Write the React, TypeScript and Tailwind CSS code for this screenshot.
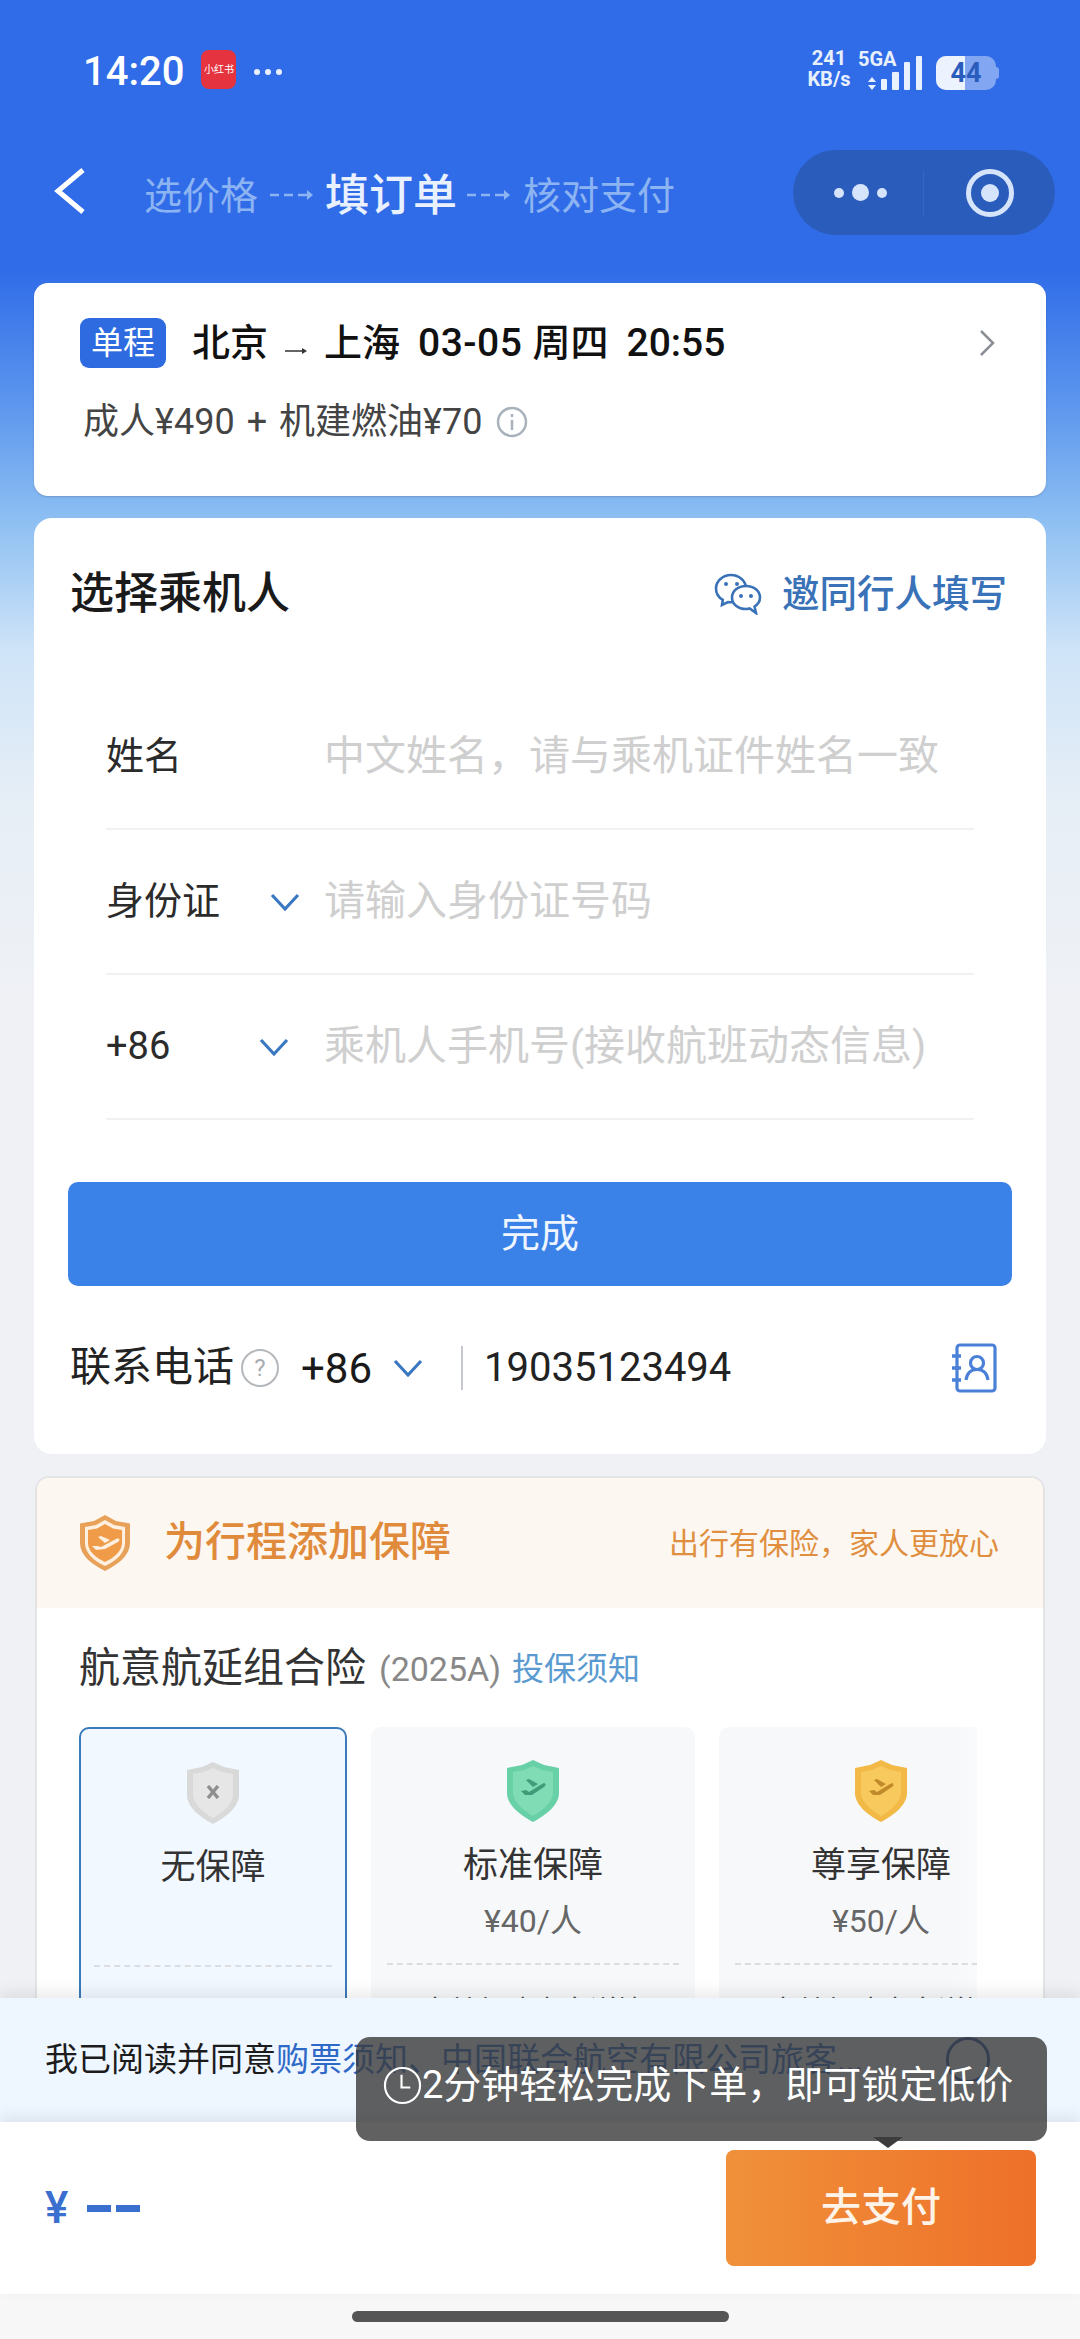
import type { ReactNode } from "react";

const Chevron = ({ className }: { className: string }) => (
    <svg viewBox="0 0 30 20" className={className} fill="none" stroke="currentColor" strokeWidth="3.2">
        <path d="M2 3l13 14L28 3" />
    </svg>
);

const DashArrow = () => (
    <svg viewBox="0 0 44 14" className="w-[44px] h-[14px] mx-[4px]" fill="none" stroke="#8db4f2" strokeWidth="2.5">
        <path d="M0 7h9M14 7h9M28 7h12" />
        <path d="M37 2l6 5-6 5z" fill="#8db4f2" stroke="none" />
    </svg>
);

const WeChatIcon = () => (
    <svg viewBox="0 0 48 42" className="w-[48px] h-[42px]" fill="none" stroke="#3a72b8" strokeWidth="2.6">
        <path d="M17 2C8.700 2 2 8 2 15.500c0 4.800 2.700 9 6.800 11.400L8 32l6-3c1 .2 2 .3 3 .3 8.300 0 15-6 15-13.800C32 8 25.300 2 17 2z" />
        <path d="M32 13c-8 0-14 5-14 11.500S24 36 32 36c1.300 0 2.500-.2 3.700-.5L42 40l-1.500-6.500c3.500-2.100 5.500-5.300 5.500-9C46 18 40 13 32 13z" fill="#fff" />
        <circle cx="12" cy="11" r="2" fill="#3a72b8" stroke="none" />
        <circle cx="23" cy="11" r="2" fill="#3a72b8" stroke="none" />
        <circle cx="27" cy="23" r="2" fill="#3a72b8" stroke="none" />
        <circle cx="37" cy="23" r="2" fill="#3a72b8" stroke="none" />
    </svg>
);

const ContactIcon = () => (
    <svg viewBox="0 0 46 50" className="w-[46px] h-[50px]" fill="none" stroke="#4a80d8" strokeWidth="3.2">
        <rect x="6" y="2" width="38" height="46" rx="3" />
        <path d="M1 13h9M1 25h9M1 37h9" strokeWidth="3.500" />
        <circle cx="26" cy="20" r="6.500" />
        <path d="M15 37c1-7 5-10.500 11-10.500S36 30 37 37" />
    </svg>
);

const OrangeShield = () => (
    <svg viewBox="0 0 52 56" className="w-[52px] h-[56px]">
        <path d="M26 0l11 6 14 2.500V28c0 12-11 21-25 28C12 49 1 40 1 28V8.500L15 6z" fill="#e8a158" />
        <path d="M26 5l9 5 11 2v16c0 10-9 18-20 23C15 46 6 38 6 28V12l11-2z" fill="#fdf0e0" />
        <path d="M26 9l8 4.500 9 1.500v13c0 8-8 15-17 19C17 43 9 36 9 28V15l9-1.500z" fill="#ef9b48" />
        <path d="M13 31h6l3 1 15-8c3-1.500 5 1 2 3l-13 7-9 1zM19 22l3-1 9 4-5 3z" fill="#fdf0e0" />
    </svg>
);

const PlaneMark = ({ color }: { color: string }) => (
    <path d="M17 32l5-1 3 2 13-8c3-2 5 1 2 3l-12 8H21zM22 21l3-1 9 5-5 3z" fill={color} />
);

const Shield = ({ body, edge, children }: { body: string; edge: string; children: ReactNode }) => (
    <svg viewBox="0 0 58 64" className="w-[58px] h-[64px]">
        <path d="M29 1l11 5 15 3v25c0 12-13 22-26 29C16 56 3 46 3 34V9l15-3z" fill={edge} />
        <path d="M29 7l9 4 11 2v20c0 10-10 18-20 24C19 51 9 43 9 33V13l11-2z" fill={body} />
        {children}
    </svg>
);

const Field = ({ label, hint, chevron }: { label: string; hint: string; chevron?: string }) => (
    <div className="flex items-center h-[145px] border-b-2 border-[#f0f1f3] relative">
        <span className="text-[38px] text-[#2b2b2b]">{label}</span>
        {chevron && <Chevron className={chevron} />}
        <span className="absolute left-[218px] text-[41px] text-[#cfcfcf] whitespace-nowrap">{hint}</span>
    </div>
);

const PlanCard = ({ className, icon, name, price, foot }: { className: string; icon: ReactNode; name: string; price?: string; foot: string }) => (
    <div className={`shrink-0 rounded-[10px] flex flex-col items-center pt-[32px] h-[320px] overflow-hidden ${className}`}>
        {icon}
        <div className="text-[35px] text-[#333] mt-[18px] leading-[50px]">{name}</div>
        <div className="text-[32px] text-[#666] mt-[5px] leading-[50px] h-[50px]">{price}</div>
        <div className="w-[90%] border-t-2 border-dashed border-[#dcdde0] mt-[17px]" />
        <div className="text-[28px] text-[#444] mt-[26px] whitespace-nowrap">{foot}</div>
    </div>
);

export default function App() {
    return (
        <div
            className="relative w-[1080px] h-[2339px] overflow-hidden flex flex-col bg-[linear-gradient(180deg,#306ce8_0,#306ce8_270px,#5b95ee_400px,#8dbff2_520px,#cfe4f8_650px,#e6eef6_800px,#eff1f5_1000px)]"
            style={{ fontFamily: 'Roboto, "Noto Sans CJK SC", sans-serif' }}
        >
            <div className="flex-1 min-h-0 overflow-hidden">
                {/* status bar */}
                <div className="flex items-center h-[90px] pt-[54px] pl-[83px] pr-[81px] text-white">
                    <span className="text-[40px] font-medium leading-none">14:20</span>
                    <span className="ml-[17px] mt-[-5px] w-[35px] h-[39px] rounded-[8px] bg-[#e5343f] flex items-center justify-center text-[10px] leading-none whitespace-nowrap">小红书</span>
                    <span className="ml-[18px] flex gap-[5px]">
                        <i className="w-[6px] h-[6px] rounded-full bg-white/90" />
                        <i className="w-[6px] h-[6px] rounded-full bg-white/90" />
                        <i className="w-[6px] h-[6px] rounded-full bg-white/90" />
                    </span>
                    <div className="ml-auto flex items-end mt-[-6px]">
                        <div className="flex flex-col items-center text-[20px] font-bold leading-[21px] text-[#e8f0fd] w-[46px]">
                            <span>241</span>
                            <span>KB/s</span>
                        </div>
                        <div className="relative w-[72px] h-[38px] ml-[6px]">
                            <span className="absolute left-0 top-[-3px] text-[20px] font-bold leading-[21px] text-[#e8f0fd]">5GA</span>
                            <svg viewBox="0 0 72 38" className="absolute inset-0 w-[72px] h-[38px]" fill="#eaf1fe">
                                <path d="M14 25l4 5h-8zM14 38l4-5h-8z" />
                                <rect x="23" y="27" width="6" height="11" rx="1" />
                                <rect x="34" y="20" width="7" height="18" rx="1" />
                                <rect x="46" y="10" width="6" height="28" rx="1" />
                                <rect x="58" y="4" width="6" height="34" rx="1" />
                            </svg>
                        </div>
                        <div className="relative ml-[6px] w-[60px] h-[34px] rounded-[10px] bg-white/40 overflow-hidden flex items-center justify-center">
                            <span className="absolute left-0 top-0 bottom-0 w-[29px] bg-[#edf3fe]" />
                            <span className="relative text-[27px] font-bold text-[#2a5cbc] leading-none">44</span>
                        </div>
                        <span className="w-[3px] h-[12px] mb-[11px] bg-white/40 rounded-r" />
                    </div>
                </div>

                {/* nav */}
                <div className="flex items-center h-[85px] mt-[60px] pl-[54px] pr-[25px]">
                    <svg viewBox="0 0 32 48" className="w-[32px] h-[48px] mt-[-4px]" fill="none" stroke="#fff" strokeWidth="5">
                        <path d="M29 3L4 24l25 21" />
                    </svg>
                    <span className="ml-[58px] mt-[8px] text-[38px] text-[#8db4f2]">选价格</span>
                    <span className="ml-[8px] mt-[4px] flex"><DashArrow /></span>
                    <span className="ml-[7px] mt-[6px] text-[44px] font-medium text-[#eaf1fe] whitespace-nowrap">填订单</span>
                    <span className="ml-[6px] mt-[4px] flex items-center"><DashArrow /></span>
                    <span className="ml-[8px] mt-[8px] text-[38px] text-[#8db4f2] whitespace-nowrap">核对支付</span>
                    <div className="ml-auto w-[262px] h-[85px] rounded-full bg-[#2a5cbc] flex items-center">
                        <div className="flex-1 flex items-center justify-center gap-[8px] pl-[4px]">
                            <i className="w-[10px] h-[10px] rounded-full bg-[#d6e4fb]" />
                            <i className="w-[17px] h-[17px] rounded-full bg-[#d6e4fb]" />
                            <i className="w-[10px] h-[10px] rounded-full bg-[#d6e4fb]" />
                        </div>
                        <div className="w-px h-[46px] bg-[#3566c4]" />
                        <div className="w-[131px] flex justify-center">
                            <div className="w-[48px] h-[48px] rounded-full border-[5px] border-[#d6e4fb] flex items-center justify-center">
                                <i className="w-[18px] h-[18px] rounded-full bg-[#d6e4fb]" />
                            </div>
                        </div>
                    </div>
                </div>

                <div className="px-[34px]">
                    {/* flight card */}
                    <div className="mt-[48px] h-[213px] rounded-[14px] bg-white px-[46px] pt-[35px] shadow-[0_1px_2px_rgba(60,80,110,.3)]">
                        <div className="flex items-center h-[50px]">
                            <span className="w-[86px] h-[50px] rounded-[9px] bg-[#2e6be0] text-white text-[32px] flex items-center justify-center">单程</span>
                            <span className="ml-[26px] text-[38px] font-medium text-[#111]">北京</span>
                            <svg viewBox="0 0 22 6" className="w-[22px] h-[6px] ml-[17px] mt-[16px]" fill="#333">
                                <path d="M0 2.200h17V0l5 3-5 3V3.800H0z" />
                            </svg>
                            <span className="ml-[17px] text-[38px] font-medium text-[#111]">上海</span>
                            <span className="ml-[18px] text-[39px] font-medium text-[#111] tracking-[0.5px]">03-05</span>
                            <span className="ml-[10px] text-[38px] font-medium text-[#111]">周四</span>
                            <span className="ml-[18px] text-[39px] font-medium text-[#111]">20:55</span>
                            <svg viewBox="0 0 16 28" className="w-[16px] h-[28px] ml-auto mr-[5px]" fill="none" stroke="#8a8f96" strokeWidth="2.500">
                                <path d="M2 2l12 12L2 26" />
                            </svg>
                        </div>
                        <div className="flex items-center mt-[30px] pl-[3px] text-[36px] text-[#444] leading-[48px] whitespace-nowrap">
                            <span>成人¥490</span>
                            <span className="mx-[12px]">+</span>
                            <span>机建燃油¥70</span>
                            <svg viewBox="0 0 32 32" className="w-[32px] h-[32px] ml-[14px]" fill="none" stroke="#a9b2bb" strokeWidth="2.500">
                                <circle cx="16" cy="16" r="14" />
                                <path d="M16 14v10" />
                                <path d="M16 8v3" />
                            </svg>
                        </div>
                    </div>

                    {/* passenger card */}
                    <div className="mt-[22px] h-[936px] rounded-[18px] bg-white">
                        <div className="flex items-center justify-between pt-[46px] pl-[36px] pr-[39px] h-[106px]">
                            <span className="text-[44px] font-medium text-[#1a1a1a] whitespace-nowrap">选择乘机人</span>
                            <span className="flex items-center gap-[20px] text-[37.500px] font-medium text-[#3a72b8] whitespace-nowrap">
                                <WeChatIcon />
                                邀同行人填写
                            </span>
                        </div>
                        <div className="mx-[72px] mt-[61px] mb-[62px]">
                            <Field label="姓名" hint="中文姓名，请与乘机证件姓名一致" />
                            <Field label="身份证" hint="请输入身份证号码" chevron="w-[30px] h-[20px] text-[#3a78c2] ml-[50px]" />
                            <Field label="+86" hint="乘机人手机号(接收航班动态信息)" chevron="w-[30px] h-[20px] text-[#3a78c2] ml-[89px]" />
                        </div>
                        <div className="mx-[34px] h-[104px] rounded-[10px] bg-[#3b82e8] flex items-center justify-center text-[39px] text-[#eef5ff]">完成</div>
                        <div className="flex items-center mt-[52px] pl-[36px] pr-[49px] h-[60px]">
                            <span className="text-[41px] text-[#222] whitespace-nowrap">联系电话</span>
                            <span className="ml-[7px] w-[38px] h-[38px] rounded-full border-2 border-[#b4b8bd] flex items-center justify-center text-[24px] text-[#a8adb3]">?</span>
                            <span className="ml-[22px] text-[42px] text-[#1a1a1a]">+86</span>
                            <Chevron className="w-[30px] h-[20px] text-[#3a78c2] ml-[21px]" />
                            <span className="ml-[38px] w-[2px] h-[44px] bg-[#c4c7cb]" />
                            <span className="ml-[21px] text-[40px] text-[#222]">19035123494</span>
                            <span className="ml-auto"><ContactIcon /></span>
                        </div>
                    </div>

                    {/* insurance card */}
                    <div className="mt-[22px] mx-px h-[700px] rounded-[14px] border-2 border-[#e3e4e6] bg-white overflow-hidden">
                        <div className="flex items-center h-[130px] bg-[#fdf7f1] pl-[42px] pr-[44px]">
                            <OrangeShield />
                            <span className="ml-[33px] text-[41px] font-medium text-[#e08a3c] whitespace-nowrap">为行程添加保障</span>
                            <span className="ml-auto text-[30px] text-[#df8f3f] whitespace-nowrap">出行有保险，家人更放心</span>
                        </div>
                        <div className="flex items-center pl-[42px] mt-[36px] h-[50px] whitespace-nowrap">
                            <span className="text-[41px] text-[#333]">航意航延组合险</span>
                            <span className="ml-[13px] text-[34px] text-[#888]">(2025A)</span>
                            <span className="ml-[11px] text-[32px] text-[#5a9ad0]">投保须知</span>
                        </div>
                        <div className="flex gap-[24px] ml-[42px] mt-[33px] w-[898px] overflow-hidden">
                            <PlanCard
                                className="w-[268px] bg-[#f2f8ff] border-2 border-[#3a7ab8]"
                                name="无保障"
                                foot="无"
                                icon={
                                    <Shield body="#e6e6e6" edge="#d9d9d9">
                                        <path d="M24 25l10 12M34 25L24 37" stroke="#8e8e8e" strokeWidth="3.500" fill="none" />
                                    </Shield>
                                }
                            />
                            <PlanCard
                                className="w-[324px] bg-[#f7f8fa]"
                                name="标准保障"
                                price="¥40/人"
                                foot="本单保障内容详情"
                                icon={
                                    <Shield body="#7fdcb4" edge="#68d0a6">
                                        <PlaneMark color="#3f9b78" />
                                    </Shield>
                                }
                            />
                            <PlanCard
                                className="w-[324px] bg-[linear-gradient(90deg,#f7f8fa_72%,#ffffff)]"
                                name="尊享保障"
                                price="¥50/人"
                                foot="本单保障内容详情"
                                icon={
                                    <Shield body="#f8ca5e" edge="#f2b947">
                                        <PlaneMark color="#c08a2a" />
                                    </Shield>
                                }
                            />
                        </div>
                    </div>
                </div>
            </div>

            {/* agreement */}
            <div className="relative shrink-0 h-[124px] bg-[#eef6ff] shadow-[0_-6px_14px_rgba(0,0,0,.08)] flex items-center pl-[45px] pr-[90px] text-[33px] whitespace-nowrap">
                <span className="text-[#1c1c1c]">我已阅读并同意</span>
                <span className="text-[#2f69c8]">购票须知、中国联合航空有限公司旅客...</span>
                <span className="ml-auto w-[44px] h-[46px] rounded-full border-[3px] border-[#2a5ab0]" />
            </div>

            {/* pay bar */}
            <div className="relative shrink-0 h-[172px] bg-white shadow-[0_-6px_14px_rgba(0,0,0,.08)] flex items-center pl-[45px] pr-[44px]">
                <span className="text-[44px] font-medium text-[#3a6fd0]">¥</span>
                <span className="ml-[19px] flex gap-[5px]">
                    <i className="w-[24px] h-[7px] bg-[#3a6fd0]" />
                    <i className="w-[24px] h-[7px] bg-[#3a6fd0]" />
                </span>
                <div className="ml-auto w-[310px] h-[116px] rounded-[8px] bg-[linear-gradient(90deg,#f0913a,#ee7029)] flex items-center justify-center text-[40px] font-medium text-[#fdf3e8]">去支付</div>
            </div>

            {/* home indicator */}
            <div className="shrink-0 h-[45px] bg-[#f7f7f7] flex items-center justify-center">
                <span className="w-[377px] h-[11px] rounded-full bg-[#555]" />
            </div>

            {/* tooltip */}
            <div className="absolute left-[356px] top-[2037px] w-[691px] h-[104px] rounded-[14px] bg-[#3a3a3a]/80 flex items-center pl-[27px] pb-[8px] text-[38px] text-white whitespace-nowrap">
                <svg viewBox="0 0 40 40" className="w-[39px] h-[39px] shrink-0" fill="none" stroke="#fff" strokeWidth="2.200">
                    <circle cx="20" cy="20" r="18" />
                    <path d="M19 9v13h9" />
                </svg>
                <span>2分钟轻松完成下单，即可锁定低价</span>
                <span className="absolute left-[517px] top-[100px] w-0 h-0 border-x-[15px] border-x-transparent border-t-[11px] border-t-[#3c3c3c]" />
            </div>
        </div>
    );
}
